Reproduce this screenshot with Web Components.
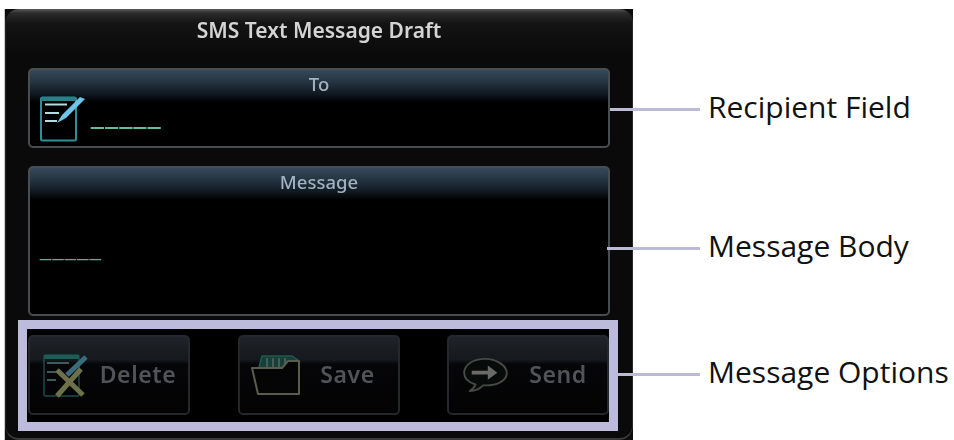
<!DOCTYPE html>
<html>
<head>
<meta charset="utf-8">
<title>SMS Text Message Draft</title>
<style>
html, body { margin: 0; height: 440px; overflow: hidden; background: #fff; }
body { display: flex; align-items: flex-start; padding: 9px 0 0 5px; box-sizing: border-box; }
</style>
</head>
<body>
<sms-screen title-text="SMS Text Message Draft">
    <sms-field label="To" height="80" dash="to">
        <svg slot="icon" width="46" height="46" viewBox="0 0 46 46" fill="none">
            <rect x="2" y="1.500" width="35" height="43" rx="1.500" stroke="#2f8f96" stroke-width="2"/>
            <path d="M2 1h35v4H2z" fill="#2a8088"/>
            <path d="M6 8.500h22M6 17h14M6 25h12" stroke="#b4dde0" stroke-width="2"/>
            <path d="M46 3 27 22l-9 5 5-8L41 1z" fill="#6cc6ea"/>
        </svg>
    </sms-field>
    <sms-field label="Message" height="150" dash="body" gap="18"></sms-field>
    <sms-options>
        <sms-button label="Delete">
            <svg slot="icon" width="46" height="46" viewBox="0 0 46 46" fill="none">
                <rect x="2" y="3" width="35" height="41" rx="1.500" stroke="#1c4a4c" stroke-width="1.500"/>
                <path d="M2 3h35v4H2z" fill="#1c5c56"/>
                <path d="M5 11h22M5 20h10M5 28h9" stroke="#3a5a5e" stroke-width="2"/>
                <path d="M44 5 25 23" stroke="#3a6d7c" stroke-width="5"/>
                <path d="M15 18 41 43M39 17 15 44" stroke="#6d7048" stroke-width="5"/>
            </svg>
        </sms-button>
        <sms-button label="Save">
            <svg slot="icon" style="margin:0 -4px 0 -2px" width="52" height="42" viewBox="0 0 52 42" fill="none">
                <path d="M9 13 12 2h30l7 5v9" fill="#173f3a" stroke="#1f5a4e" stroke-width="1.500"/>
                <path d="M17 4v9M23 4v9M29 4v9M35 4v9M41 6v9" stroke="#5b6a5c" stroke-width="1.500"/>
                <path d="M2 14h30l6-7h11v33H8z" fill="#050505" stroke="#5c5c4e" stroke-width="2" stroke-linejoin="round"/>
            </svg>
        </sms-button>
        <sms-button label="Send">
            <svg slot="icon" width="48" height="36" viewBox="0 0 48 38" fill="none">
                <path d="M24 2C12 2 2 8 2 17c0 6 5 10 12 12-1 3-3 5-6 7 6 0 11-3 14-6h3c12 0 22-5 22-13S36 2 24 2z" fill="#070c0a" stroke="#454a44" stroke-width="2" stroke-linejoin="round"/>
                <path d="M10 16.500h20" stroke="#6a6a66" stroke-width="4"/>
                <path d="M27 9l10 7.500L27 24z" fill="#6a6a66"/>
            </svg>
        </sms-button>
    </sms-options>
</sms-screen>
<sms-callouts>
    <sms-callout reach="23" top="80">Recipient Field</sms-callout>
    <sms-callout reach="26" top="99">Message Body</sms-callout>
    <sms-callout reach="17" top="86">Message Options</sms-callout>
</sms-callouts>

<script>
class SmsScreen extends HTMLElement {
    constructor() {
        super();
        this.attachShadow({ mode: 'open' });
        this.shadowRoot.innerHTML = `
        <style>
            :host {
                display: block;
                flex: none;
                width: 628px;
                height: 431px;
                background: #0c0c0c;
                box-shadow: -1px 0 #c8c8c8;
                font-family: "Noto Sans", sans-serif;
                filter: blur(.5px);
            }
            .panel {
                box-sizing: border-box;
                height: 100%;
                padding: 0 22px;
                border-radius: 14px;
                border-left: 1px solid #222;
                border-right: 1px solid #2a2a2a;
                border-bottom: 2px solid #3a3a3a;
                background: linear-gradient(#5a5a5a 0, #2c2c2c 4px, #141414 14px, #0a0a0a 45px);
                display: flex;
                flex-direction: column;
            }
            h1 {
                margin: 0;
                height: 59px;
                flex: none;
                box-sizing: border-box;
                padding-top: 7px;
                font-size: 21px;
                line-height: 28px;
                font-weight: 600;
                text-align: center;
                color: #d4d4d4;
            }
        </style>
        <div class="panel">
            <h1></h1>
            <slot></slot>
        </div>
        `;
    }

    connectedCallback() {
        this.shadowRoot.querySelector('h1').textContent = this.getAttribute('title-text') ?? '';
    }
}
window.customElements.define('sms-screen', SmsScreen);

class SmsField extends HTMLElement {
    constructor() {
        super();
        this.attachShadow({ mode: 'open' });
        this.shadowRoot.innerHTML = `
        <style>
            :host {
                display: block;
                box-sizing: border-box;
                border: 2px solid #484d50;
                border-radius: 5px;
                background: linear-gradient(#35495a 0, #273845 10px, #101820 24px, #000 32px);
            }
            .label {
                height: 26px;
                text-align: center;
                font-size: 18.500px;
                line-height: 27px;
                font-weight: 500;
                color: #a3b1c0;
            }
            .row { display: flex; align-items: flex-end; }
            .dash {
                font-family: "Liberation Sans", sans-serif;
                color: #6fc7ad;
                white-space: nowrap;
            }
            :host([dash="to"]) .row { padding: 0 0 0 9px; gap: 6px; }
            :host([dash="to"]) .dash { font-size: 23px; letter-spacing: 1.400px; line-height: 30px; padding-bottom: 10px; font-weight: 700; text-shadow: 0 1px 0 #6fc7ad; }
            :host([dash="body"]) .row { padding: 40px 0 0 10px; }
            :host([dash="body"]) .dash { font-size: 20px; letter-spacing: 1.300px; line-height: 30px; opacity: .85; }
        </style>
        <div class="label"></div>
        <div class="row">
            <slot name="icon"></slot>
            <span class="dash">_____</span>
        </div>
        `;
    }

    connectedCallback() {
        this.shadowRoot.querySelector('.label').textContent = this.getAttribute('label') ?? '';
        this.style.height = this.getAttribute('height') + 'px';
        this.style.marginTop = (this.getAttribute('gap') ?? 0) + 'px';
        this.style.flex = 'none';
    }
}
window.customElements.define('sms-field', SmsField);

class SmsOptions extends HTMLElement {
    constructor() {
        super();
        this.attachShadow({ mode: 'open' });
        this.shadowRoot.innerHTML = `
        <style>
            :host {
                display: flex;
                flex: none;
                justify-content: space-between;
                box-sizing: border-box;
                width: 600px;
                height: 111px;
                margin: 4px 0 0 -10px;
                padding: 6px 0 0 1px;
                border: 9px solid #bcbbdc;
                background: #000;
            }
        </style>
        <slot></slot>
        `;
    }
}
window.customElements.define('sms-options', SmsOptions);

class SmsButton extends HTMLElement {
    constructor() {
        super();
        this.attachShadow({ mode: 'open' });
        this.shadowRoot.innerHTML = `
        <style>
            :host {
                display: flex;
                align-items: center;
                box-sizing: border-box;
                width: 162px;
                height: 80px;
                padding-left: 12px;
                border: 2px solid #24272b;
                border-radius: 5px;
                background: linear-gradient(#1f242a 0, #15181c 23px, #060608 27px, #030304);
            }
            .text {
                flex: 1;
                text-align: center;
                padding-bottom: 3px;
                font-size: 23px;
                font-weight: 600;
                letter-spacing: .6px;
                color: #505459;
            }
            ::slotted(svg) { flex: none; }
        </style>
        <slot name="icon"></slot>
        <span class="text"></span>
        `;
    }

    connectedCallback() {
        this.shadowRoot.querySelector('.text').textContent = this.getAttribute('label') ?? '';
    }
}
window.customElements.define('sms-button', SmsButton);

class SmsCallouts extends HTMLElement {
    constructor() {
        super();
        this.attachShadow({ mode: 'open' });
        this.shadowRoot.innerHTML = `
        <style>
            :host { display: flex; flex-direction: column; flex: none; position: relative; z-index: 1; }
        </style>
        <slot></slot>
        `;
    }
}
window.customElements.define('sms-callouts', SmsCallouts);

class SmsCallout extends HTMLElement {
    constructor() {
        super();
        this.attachShadow({ mode: 'open' });
        this.shadowRoot.innerHTML = `
        <style>
            :host {
                display: flex;
                align-items: center;
                height: 40px;
                gap: 8px;
                font-family: "Open Sans", sans-serif;
                font-size: 30px;
                color: #111;
                white-space: nowrap;
            }
            .line {
                flex: none;
                height: 3px;
                background: #bcbbd6;
            }
            .text { padding-bottom: 5px; }
        </style>
        <span class="line"></span>
        <span class="text"><slot></slot></span>
        `;
    }

    connectedCallback() {
        const reach = Number(this.getAttribute('reach') ?? 0);
        this.style.marginTop = (this.getAttribute('top') ?? 0) + 'px';
        const line = this.shadowRoot.querySelector('.line');
        line.style.width = (67 + reach) + 'px';
        line.style.marginLeft = -reach + 'px';
    }
}
window.customElements.define('sms-callout', SmsCallout);
</script>
</body>
</html>
